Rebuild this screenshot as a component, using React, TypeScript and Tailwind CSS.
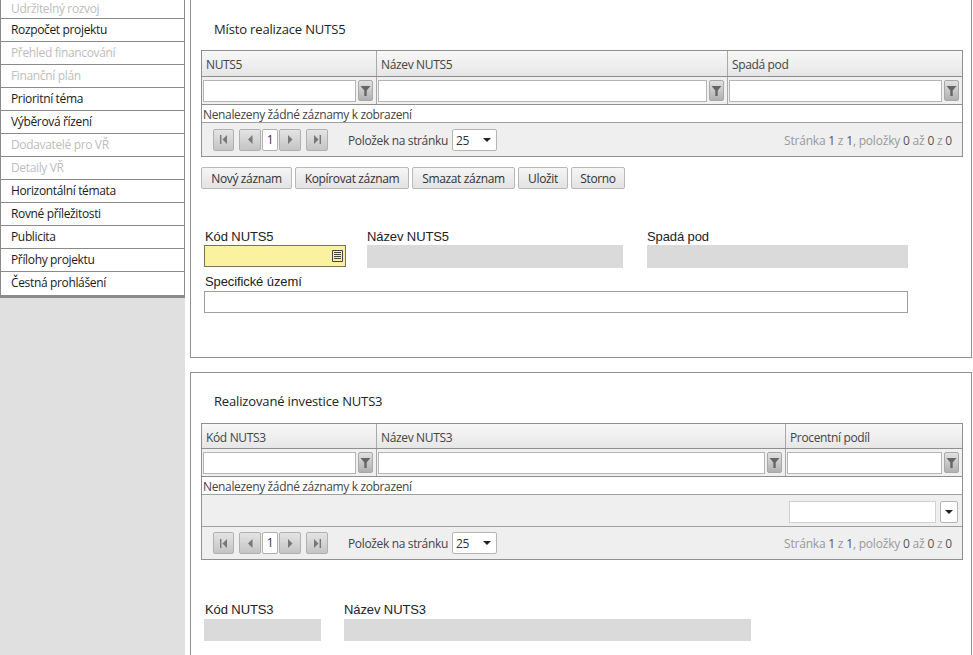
const segoe = "font-['Open_Sans',sans-serif] text-[12px] tracking-[-0.35px]";
const arial = "font-['Liberation_Sans',sans-serif] text-[13px] tracking-[-0.1px] text-[#222]";

const menuItems = [
  { label: "Udržitelný rozvoj", disabled: true },
  { label: "Rozpočet projektu" },
  { label: "Přehled financování", disabled: true },
  { label: "Finanční plán", disabled: true },
  { label: "Prioritní téma" },
  { label: "Výběrová řízení" },
  { label: "Dodavatelé pro VŘ", disabled: true },
  { label: "Detaily VŘ", disabled: true },
  { label: "Horizontální témata" },
  { label: "Rovné příležitosti" },
  { label: "Publicita" },
  { label: "Přílohy projektu" },
  { label: "Čestná prohlášení" },
];

const FunnelIcon = () => (
  <svg width="11" height="12" viewBox="0 0 11 12">
    <path d="M0.5 1h10L6.7 5.6V11H4.3V5.6z" fill="#666" />
  </svg>
);

const PagerIcon = ({ kind }: { kind: "first" | "prev" | "next" | "last" }) => (
  <svg width="10" height="11" viewBox="0 0 10 11" fill="#777">
    {kind === "first" && <path d="M1 1h1.4v9H1zM8 1v9L3.5 5.5z" />}
    {kind === "prev" && <path d="M7.5 1v9L3 5.5z" />}
    {kind === "next" && <path d="M3 1v9l4.5-4.5z" />}
    {kind === "last" && <path d="M2 1v9l4.5-4.5zM7.6 1H9v9H7.6z" />}
  </svg>
);

const FilterCell = ({ className }: { className: string }) => (
  <div className={`flex items-start gap-[2px] pl-px pr-[3px] pt-[3px] border-r border-[#a9a9a9] last:border-r-0 ${className}`}>
    <div className="flex-1 h-[22px] bg-white border border-[#b5b5b5]" />
    <div className="w-[15px] h-[21px] rounded-[2px] border border-[#a8a8a8] bg-gradient-to-b from-[#e2e2e2] to-[#b0b0b0] flex items-center justify-center">
      <FunnelIcon />
    </div>
  </div>
);

const PagerButton = ({ kind, className }: { kind: "first" | "prev" | "next" | "last"; className: string }) => (
  <div className={`h-[22px] rounded-[2px] border border-[#b0b0b0] bg-gradient-to-b from-[#e4e4e4] to-[#c4c4c4] flex items-center justify-center ${className}`}>
    <PagerIcon kind={kind} />
  </div>
);

const Pager = ({ height }: { height: string }) => (
  <div className={`flex items-center ${height} bg-[#efefef] pl-[11px] pr-[10px] text-[#444] ${segoe}`}>
    <PagerButton kind="first" className="w-[21px]" />
    <PagerButton kind="prev" className="w-[22px] ml-[5px]" />
    <div className="w-[16px] h-[22px] mx-px rounded-[2px] bg-white border border-[#b0b0b0] flex items-center justify-center text-[#333]">1</div>
    <PagerButton kind="next" className="w-[22px]" />
    <PagerButton kind="last" className="w-[22px] ml-[5px]" />
    <span className="ml-[20px] pt-[2px]">Položek na stránku</span>
    <div className="ml-[4px] w-[45px] h-[22px] rounded-[2px] bg-white border border-[#b5b5b5] flex items-center justify-between pl-[3px] pr-[5px]">
      <span className="text-[#333] pt-[2px]">25</span>
      <div className="w-0 h-0 border-x-[4px] border-x-transparent border-t-[4px] border-t-[#222]" />
    </div>
    <span className="ml-auto pt-[2px] text-[#999] tracking-[-0.2px]">
      Stránka <span className="text-[#555]">1</span> z <span className="text-[#555]">1</span>, položky <span className="text-[#555]">0</span> až <span className="text-[#555]">0</span> z <span className="text-[#555]">0</span>
    </span>
  </div>
);

const Grid = ({ columns, headerHeight }: { columns: { label: string; width: string }[]; headerHeight: string }) => (
  <>
    <div className={`flex ${headerHeight} border-b border-[#8f8f8f] bg-gradient-to-b from-[#f8f8f8] to-[#e6e6e6] text-[#444] ${segoe}`}>
      {columns.map((c) => (
        <div key={c.label} className={`${c.width} pl-[4px] pt-[5px] border-r border-[#a9a9a9] last:border-r-0`}>
          {c.label}
        </div>
      ))}
    </div>
    <div className="flex h-[28px] bg-[#f0f0f0] border-b border-[#8f8f8f]">
      {columns.map((c) => (
        <FilterCell key={c.label} className={c.width} />
      ))}
    </div>
    <div className={`h-[18px] pl-px border-b border-[#a0a0a0] text-[#444] leading-[20px] ${segoe}`}>
      Nenalezeny žádné záznamy k zobrazení
    </div>
  </>
);

const FormField = ({ label, className, boxClass }: { label: string; className: string; boxClass: string }) => (
  <div className={className}>
    <div className={`h-[16px] leading-[18px] ${arial}`}>{label}</div>
    <div className={boxClass} />
  </div>
);

const ActionButton = ({ label, width }: { label: string; width: string }) => (
  <button className={`${width} h-[22px] pt-[2px] rounded-[2px] border border-[#b8b8b8] bg-gradient-to-b from-[#f6f6f6] to-[#e2e2e2] text-[#333] ${segoe}`}>
    {label}
  </button>
);

const Title = ({ text }: { text: string }) => (
  <h2 className="pl-[13px] text-[13px] leading-[16px] tracking-[-0.15px] text-[#222] font-['Open_Sans',sans-serif]">{text}</h2>
);

export default function App() {
  return (
    <div className="flex h-[655px] w-[973px] overflow-hidden bg-white">
      <aside className="w-[185px] shrink-0 bg-[#e0e0e0]">
        <ul className="bg-white border-x border-[#8a8a8a] border-b-[3px] border-b-[#8a8a8a]">
          {menuItems.map((item) => (
            <li
              key={item.label}
              className={`h-[23px] pl-[10px] leading-[22px] border-b border-[#8a8a8a] first:h-[19px] first:leading-[17px] last:border-b-0 ${segoe} ${item.disabled ? "text-[#bdbdbd]" : "text-[#1a1a1a]"}`}
            >
              {item.label}
            </li>
          ))}
        </ul>
      </aside>

      <main className="flex-1 pl-[5px] pr-px">
        <section className="h-[358px] border-x border-b border-[#8f8f8f] pl-[10px] pt-[21px]">
          <Title text="Místo realizace NUTS5" />
          <div className="mt-[13px] w-[762px] border border-[#8f8f8f]">
            <Grid
              headerHeight="h-[26px]"
              columns={[
                { label: "NUTS5", width: "w-[175px]" },
                { label: "Název NUTS5", width: "w-[351px]" },
                { label: "Spadá pod", width: "flex-1" },
              ]}
            />
            <Pager height="h-[33px]" />
          </div>
          <div className="mt-[10px] flex gap-[3px]">
            <ActionButton label="Nový záznam" width="w-[91px]" />
            <ActionButton label="Kopírovat záznam" width="w-[114px]" />
            <ActionButton label="Smazat záznam" width="w-[103px]" />
            <ActionButton label="Uložit" width="w-[50px]" />
            <ActionButton label="Storno" width="w-[54px]" />
          </div>
          <div className="mt-[39px] ml-[3px] flex">
            <div className="w-[142px]">
              <div className={`h-[17px] pl-px leading-[18px] ${arial}`}>Kód NUTS5</div>
              <div className="h-[22px] border border-[#77725a] bg-[#fbf29f] flex items-center justify-end pr-[2px]">
                <svg width="11" height="12" viewBox="0 0 11 12" fill="none" stroke="#444">
                  <path d="M0.5 0.5h10v11h-10zM2 2.5h7M2 4.5h7M2 6.5h7M2 8.5h7" />
                </svg>
              </div>
            </div>
            <FormField label="Název NUTS5" className="ml-[21px] w-[256px]" boxClass="mt-px h-[23px] bg-[#dadada]" />
            <FormField label="Spadá pod" className="ml-[24px] w-[261px]" boxClass="mt-px h-[23px] bg-[#dadada]" />
          </div>
          <div className="mt-[6px] ml-[3px] w-[704px]">
            <div className={`h-[17px] pl-px leading-[16px] ${arial}`}>Specifické území</div>
            <div className="h-[22px] bg-white border border-[#a0a0a0]" />
          </div>
        </section>

        <section className="mt-[14px] border-x border-t border-[#8f8f8f] pl-[10px] pt-[20px] h-[283px]">
          <Title text="Realizované investice NUTS3" />
          <div className="mt-[14px] w-[762px] border border-[#8f8f8f]">
            <Grid
              headerHeight="h-[25px]"
              columns={[
                { label: "Kód NUTS3", width: "w-[175px]" },
                { label: "Název NUTS3", width: "w-[409px]" },
                { label: "Procentní podíl", width: "flex-1" },
              ]}
            />
            <div className="h-[32px] pt-[2px] bg-[#efefef] border-b border-[#a0a0a0] flex items-center justify-end gap-[4px] pr-[4px]">
              <div className="w-[147px] h-[22px] bg-white border border-[#d0d0d0]" />
              <div className="w-[18px] h-[22px] bg-white border border-[#b5b5b5] rounded-[2px] flex items-center justify-center">
                <div className="w-0 h-0 border-x-[4px] border-x-transparent border-t-[4px] border-t-[#222]" />
              </div>
            </div>
            <Pager height="h-[32px]" />
          </div>
          <div className="mt-[41px] ml-[3px] flex">
            <FormField label="Kód NUTS3" className="w-[117px] pl-px" boxClass="-ml-px mt-[2px] h-[22px] bg-[#dadada]" />
            <FormField label="Název NUTS3" className="ml-[23px] w-[407px]" boxClass="mt-[2px] h-[22px] bg-[#dadada]" />
          </div>
        </section>
      </main>
    </div>
  );
}
